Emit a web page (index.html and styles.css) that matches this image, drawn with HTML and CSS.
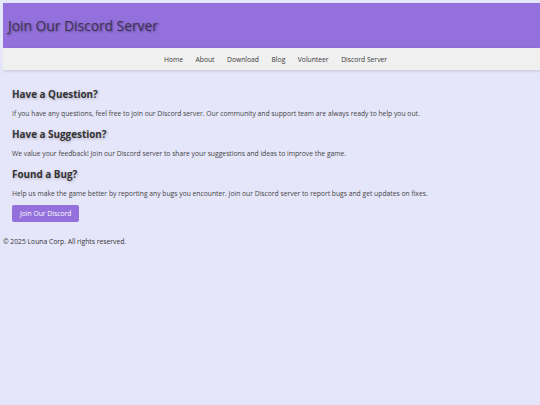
FILE: index.html
```html
<!DOCTYPE html>
<html lang="en">
<head>
<meta charset="utf-8">
<title>Join Our Discord Server</title>
<link rel="stylesheet" href="styles.css">
</head>
<body>
<header class="site-header">
  <h1 class="site-title">Join Our Discord Server</h1>
</header>
<nav class="site-nav">
  <a href="#">Home</a>
  <a href="#">About</a>
  <a href="#">Download</a>
  <a href="#">Blog</a>
  <a href="#">Volunteer</a>
  <a href="#">Discord Server</a>
</nav>
<main class="content">
  <section class="block">
    <h2 class="block-title">Have a Question?</h2>
    <p class="block-text">If you have any questions, feel free to join our Discord server. Our community and support team are always ready to help you out.</p>
  </section>
  <section class="block">
    <h2 class="block-title">Have a Suggestion?</h2>
    <p class="block-text">We value your feedback! Join our Discord server to share your suggestions and ideas to improve the game.</p>
  </section>
  <section class="block block-last">
    <h2 class="block-title">Found a Bug?</h2>
    <p class="block-text">Help us make the game better by reporting any bugs you encounter. Join our Discord server to report bugs and get updates on fixes.</p>
  </section>
  <a class="join-btn" href="#">Join Our Discord</a>
</main>
<footer class="site-footer">
  <p>&copy; 2025 Louna Corp. All rights reserved.</p>
</footer>
</body>
</html>
```

FILE: styles.css
```css
html, body {
  background: #e6e6fa;
}
body {
  margin: 3px 0 0 3px;
  font-family: "Open Sans", sans-serif;
  color: #333;
}
.site-header {
  background: #9370db;
  height: 45px;
  padding-left: 5px;
  display: flex;
  align-items: center;
}
.site-title {
  margin: 0;
  font-size: 13.8px;
  font-weight: 400;
  color: #3b3354;
  text-shadow: 1px 1px 2px rgba(0, 0, 0, 0.35);
}
.site-nav {
  background: #f0f0f0;
  height: 22px;
  display: flex;
  justify-content: center;
  align-items: center;
  gap: 12.5px;
  box-shadow: 0 1px 3px rgba(0, 0, 0, 0.15);
  padding-left: 8px;
}
.site-nav a {
  font-size: 6.75px;
  color: #3a3a3a;
  text-decoration: none;
}
.content {
  padding: 17px 9px 0;
  display: flex;
  flex-direction: column;
  align-items: flex-start;
}
.block-title {
  margin: 0 0 7.5px;
  font-size: 9.9px;
  line-height: 14px;
  font-weight: 700;
  color: #333;
  text-shadow: 1px 1px 3px rgba(0, 0, 0, 0.25);
}
.block-text {
  margin: 0 0 8.5px;
  font-size: 6.75px;
  line-height: 10px;
  color: #444;
}
.block-last .block-text {
  margin-bottom: 6px;
}
.join-btn {
  display: block;
  background: #9370db;
  color: #fff;
  font-size: 6.75px;
  text-decoration: none;
  padding: 4px 8px;
  border-radius: 2px;
  line-height: 9.3px;
}
.site-footer {
  padding-top: 15.7px;
}
.site-footer p {
  margin: 0;
  font-size: 6.75px;
  line-height: 10px;
  color: #333;
}
```
